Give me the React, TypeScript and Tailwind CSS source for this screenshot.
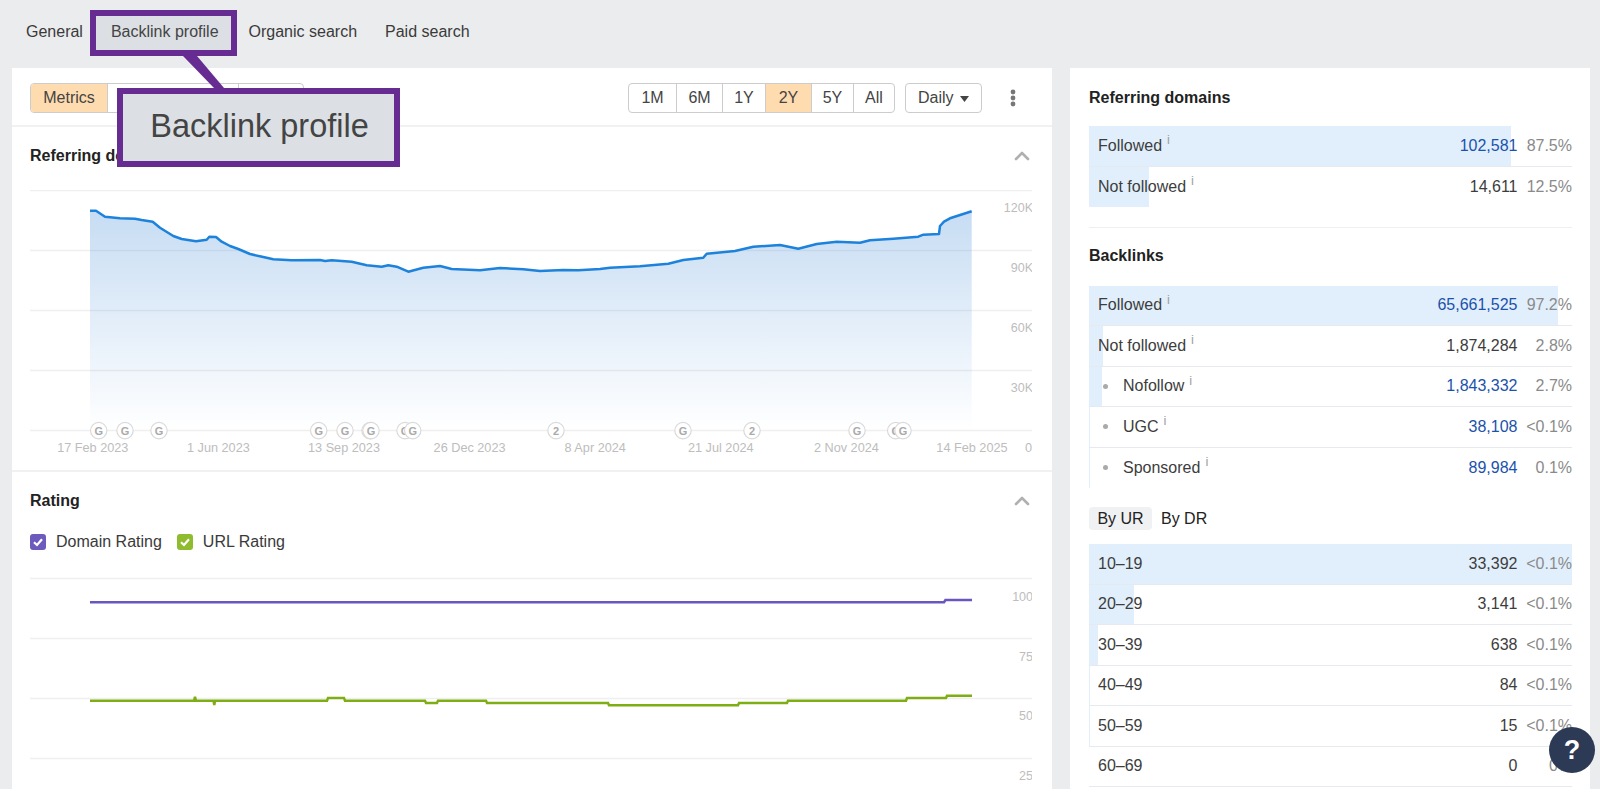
import { ChevronUp } from "lucide-react";

// points read off the reference, page coordinates
const blueLine: [number, number][] = [
  [90, 210.7], [96, 210.7], [105, 216.7], [120, 218.3], [135, 218.7], [141.7, 220], [152.7, 221.7],
  [160, 227.7], [173.3, 236], [181.7, 239], [196, 241.3], [206.7, 239.7], [209.3, 236.7], [216, 237],
  [221.7, 241.7], [230, 246], [238.3, 249], [250, 254], [273.3, 259.3], [291.7, 260.3], [320, 260],
  [325, 261], [331.7, 260.3], [351.7, 261.7], [366.7, 265.3], [381.7, 266.7], [388.3, 265.3], [396.7, 266.7],
  [408.3, 271.7], [423.3, 267.7], [440, 266], [451.7, 269], [480, 270.3], [500, 268], [523.3, 269.3],
  [540, 271], [563.3, 270], [578.3, 270.3], [600, 269], [610, 267.7], [640, 266.3], [668.3, 263.7],
  [683.3, 260], [703.3, 257.7], [706.7, 253.7], [735, 251], [753.3, 246.7], [780, 245], [798.3, 248.7],
  [816.7, 244], [836.7, 241.7], [860, 242.7], [870, 240.3], [893.3, 238.7], [918.3, 236.7], [923.3, 234.7],
  [939, 234], [940, 226], [944, 221.7], [950, 218.3], [971.7, 211.3],
];

const greenLine: [number, number][] = [
  [90, 700.7], [194, 700.7], [195, 696.7], [196, 700.7], [213.5, 700.7], [214.3, 705], [215, 700.7],
  [327, 700.7], [328, 698], [344, 698], [345, 700.7], [425, 700.7], [426, 703], [437, 703], [438, 700.7],
  [486, 700.7], [487, 703], [608, 703], [609, 705.3], [738, 705.3], [739, 703], [787, 703], [788, 700.7],
  [906, 700.7], [907, 698], [946, 698], [947, 695.7], [972, 695.7],
];

const badges: [number, string][] = [
  [98.7, "G"], [125, "G"], [159, "G"], [318.7, "G"], [345, "G"], [370, "G"], [371, "G"], [405, "G"], [412.7, "G"],
  [556, "2"], [683, "G"], [752, "2"], [857, "G"], [895.7, "G"], [903, "G"],
];

const dates = ["17 Feb 2023", "1 Jun 2023", "13 Sep 2023", "26 Dec 2023", "8 Apr 2024", "21 Jul 2024", "2 Nov 2024", "14 Feb 2025"];

const toPoints = (pts: [number, number][]) => pts.map((p) => p.join(",")).join(" ");

interface RowData {
  label: string;
  value: string;
  pct: string;
  bar: number;
  link?: boolean;
  bullet?: boolean;
  info?: boolean;
}

const referring: RowData[] = [
  { label: "Followed", value: "102,581", pct: "87.5%", bar: 87.4, link: true, info: true },
  { label: "Not followed", value: "14,611", pct: "12.5%", bar: 12.4, info: true },
];

const backlinks: RowData[] = [
  { label: "Followed", value: "65,661,525", pct: "97.2%", bar: 97.1, link: true, info: true },
  { label: "Not followed", value: "1,874,284", pct: "2.8%", bar: 2.8, info: true },
  { label: "Nofollow", value: "1,843,332", pct: "2.7%", bar: 2.7, link: true, bullet: true, info: true },
  { label: "UGC", value: "38,108", pct: "<0.1%", bar: 0.2, link: true, bullet: true, info: true },
  { label: "Sponsored", value: "89,984", pct: "0.1%", bar: 0.2, link: true, bullet: true, info: true },
];

const byRating: RowData[] = [
  { label: "10–19", value: "33,392", pct: "<0.1%", bar: 100 },
  { label: "20–29", value: "3,141", pct: "<0.1%", bar: 9.4 },
  { label: "30–39", value: "638", pct: "<0.1%", bar: 1.9 },
  { label: "40–49", value: "84", pct: "<0.1%", bar: 0.25 },
  { label: "50–59", value: "15", pct: "<0.1%", bar: 0.25 },
  { label: "60–69", value: "0", pct: "0%", bar: 0 },
];

const ranges = [
  { label: "1M", width: "w-[47px]" },
  { label: "6M", width: "w-[46px]" },
  { label: "1Y", width: "w-[43px]" },
  { label: "2Y", width: "w-[46px]", active: true },
  { label: "5Y", width: "w-[42px]" },
  { label: "All", width: "w-[41px]" },
];

const Row = ({ row, noBorder }: { row: RowData; noBorder?: boolean }) => (
  <div className={`relative flex h-[40.5px] items-center pl-[9px] text-[16px] ${noBorder ? "" : "border-b border-[#e6e9ee]"}`}>
    <div className="absolute inset-y-0 left-0 bg-[#e1effc]" style={{ width: `${row.bar}%` }} />
    <div className="relative flex flex-1 items-center text-[#3d3d3d]">
      {row.bullet && <span className="ml-[5px] mr-[15px] h-[5px] w-[5px] rounded-full bg-[#aaaaaa]" />}
      <span>{row.label}</span>
      {row.info && <span className="relative -top-[6px] ml-[5px] text-[13px] text-[#a0a0a0]">i</span>}
    </div>
    <span className={`relative ${row.link ? "text-[#1b52ab]" : "text-[#3d3d3d]"}`}>{row.value}</span>
    <span className="relative w-[54.5px] text-right text-[#8a8a8a]">{row.pct}</span>
  </div>
);

const Check = ({ color }: { color: string }) => (
  <svg width="16" height="16" viewBox="0 0 16 16">
    <rect width="16" height="16" rx="3" fill={color} />
    <path d="M4 8.2 L7 11 L12 5.2" fill="none" stroke="#ffffff" strokeWidth="2.2" />
  </svg>
);

const gridColor = "#efefef";
const axisColor = "#bdbdbd";

export default function App() {
  return (
    <div className="relative h-[789px] w-full overflow-hidden bg-[#ebecee] font-['Liberation_Sans',Arial,sans-serif]">
      {/* Tabs */}
      <nav className="flex h-[68px] items-center pb-[4px] pl-3 text-[16px] text-[#3a3a3a]">
        <div className="px-[14px]">General</div>
        <div className="-ml-[7px] -mr-[2px] mt-[2px] box-border flex h-[46px] items-center border-[6px] border-[#672c91] bg-[#dce0e5] pb-[2px] pl-[15px] pr-[12px] text-[#444444]">
          Backlink profile
        </div>
        <div className="px-[14px]">Organic search</div>
        <div className="px-[14px]">Paid search</div>
      </nav>

      <div className="flex gap-[18px] pl-3">
        {/* Left card */}
        <main className="w-[1040px] bg-white">
          <div className="box-border flex h-[59px] items-center border-b-2 border-[#f1f1f1] pl-[18px] pr-[36px] pt-[3px] text-[16px] text-[#444444]">
            <div className="flex h-[30px] overflow-hidden rounded-[4px] border border-[#cccccc]">
              <div className="flex w-[76px] items-center justify-center bg-[#ffdcb0]">Metrics</div>
              <div className="w-[131px] border-l border-[#cccccc]" />
              <div className="w-[65px] border-l border-[#cccccc]" />
            </div>
            <div className="ml-auto flex h-[30px] overflow-hidden rounded-[4px] border border-[#cccccc]">
              {ranges.map((r, i) => (
                <div
                  key={r.label}
                  className={`flex items-center justify-center ${r.width} ${r.active ? "bg-[#ffdcb0]" : ""} ${i > 0 ? "border-l border-[#cccccc]" : ""}`}
                >
                  {r.label}
                </div>
              ))}
            </div>
            <div className="ml-[10px] flex h-[30px] w-[77px] items-center rounded-[4px] border border-[#cccccc] pl-[12px]">
              Daily
              <svg className="ml-[6px] mt-[2px]" width="9" height="6" viewBox="0 0 9 6">
                <polygon points="0,0 9,0 4.5,6" fill="#444444" />
              </svg>
            </div>
            <svg className="ml-[28px]" width="6" height="18" viewBox="0 0 6 18">
              <circle cx="3" cy="3" r="2.4" fill="#777777" />
              <circle cx="3" cy="9" r="2.4" fill="#777777" />
              <circle cx="3" cy="15" r="2.4" fill="#777777" />
            </svg>
          </div>

          {/* Referring domains chart */}
          <section className="box-border h-[345px] border-b-2 border-[#f1f1f1] pl-[18px] pr-5">
            <div className="flex h-[63px] items-center justify-between pb-[5px]">
              <h2 className="text-[16px] font-bold text-[#222222]">Referring domains</h2>
              <ChevronUp className="-mr-[2px] text-[#b0b0b0]" size={24} strokeWidth={2.6} />
            </div>
            <svg className="block" width="1002" height="250" viewBox="30 190 1002 250">
              <defs>
                <linearGradient id="areaFill" gradientUnits="userSpaceOnUse" x1="0" y1="205" x2="0" y2="430">
                  <stop offset="0" stopColor="#4a90d9" stopOpacity="0.32" />
                  <stop offset="1" stopColor="#4a90d9" stopOpacity="0" />
                </linearGradient>
              </defs>
              {[190.5, 250.5, 310.5, 370.5, 430.5].map((y) => (
                <line key={y} x1="30" x2="1032" y1={y} y2={y} stroke={gridColor} strokeWidth="1.5" />
              ))}
              <polygon points={`90,430 ${toPoints(blueLine)} 971.7,430`} fill="url(#areaFill)" />
              <polyline points={toPoints(blueLine)} fill="none" stroke="#1c82dc" strokeWidth="2.5" strokeLinejoin="round" />
              {[["120K", 212], ["90K", 272], ["60K", 332], ["30K", 392]].map(([label, y]) => (
                <text key={label} x="1033" y={y} textAnchor="end" fontSize="12.5" fill={axisColor}>
                  {label}
                </text>
              ))}
              {badges.map(([x, label], i) => (
                <g key={i}>
                  <circle cx={x} cy="430.6" r="8.2" fill="#ffffff" stroke="#dadada" strokeWidth="1.2" />
                  <text x={x} y="434.6" textAnchor="middle" fontSize="11" fontWeight="bold" fill="#aaaaaa">
                    {label}
                  </text>
                </g>
              ))}
            </svg>
            <div className="relative grid grid-cols-[repeat(8,125.6px)] text-center text-[12.7px] leading-[16px] text-[#bdbdbd]">
              {dates.map((d) => (
                <span key={d} className="whitespace-nowrap">
                  {d}
                </span>
              ))}
              <span className="absolute right-0 top-0">0</span>
            </div>
          </section>

          {/* Rating chart */}
          <section className="pl-[18px] pr-5">
            <div className="flex h-[57px] items-center justify-between">
              <h2 className="text-[16px] font-bold text-[#222222]">Rating</h2>
              <ChevronUp className="-mr-[2px] text-[#b0b0b0]" size={24} strokeWidth={2.6} />
            </div>
            <div className="flex h-[26px] items-center text-[16px] text-[#3a3a3a]">
              <Check color="#6c5bbd" />
              <span className="ml-[10px]">Domain Rating</span>
              <span className="ml-[15px]">
                <Check color="#8fbb2e" />
              </span>
              <span className="ml-[10px]">URL Rating</span>
            </div>
            <svg className="mt-[15px] block" width="1002" height="219" viewBox="30 570 1002 219">
              {[578.5, 638.5, 698.5, 758.5].map((y) => (
                <line key={y} x1="30" x2="1032" y1={y} y2={y} stroke={gridColor} strokeWidth="1.5" />
              ))}
              <polyline points="90,602.3 944,602.3 945.5,600 972,600" fill="none" stroke="#6a56c0" strokeWidth="2.5" />
              <polyline points={toPoints(greenLine)} fill="none" stroke="#7fae14" strokeWidth="2.5" />
              {[["100", 601], ["75", 661], ["50", 720], ["25", 780]].map(([label, y]) => (
                <text key={label} x="1033" y={y} textAnchor="end" fontSize="12.5" fill={axisColor}>
                  {label}
                </text>
              ))}
            </svg>
          </section>
        </main>

        {/* Right card */}
        <aside className="h-[721px] w-[520px] bg-white pl-[19px] pr-[18px]">
          <h2 className="flex h-[58px] items-center pt-[2px] text-[16px] font-bold text-[#222222]">Referring domains</h2>
          {referring.map((row, i) => (
            <Row key={row.label} row={row} noBorder={i === referring.length - 1} />
          ))}
          <div className="mt-[20px] border-t border-[#efefef]" />
          <h2 className="flex h-[57.5px] items-center pb-[2px] text-[16px] font-bold text-[#222222]">Backlinks</h2>
          {backlinks.map((row, i) => (
            <Row key={row.label} row={row} noBorder={i === backlinks.length - 1} />
          ))}
          <div className="mb-[14px] mt-[19px] flex h-[23px] items-center text-[16px] text-[#222222]">
            <span className="flex h-full w-[63px] items-center justify-center rounded-[4px] bg-[#f0f1f3]">By UR</span>
            <span className="ml-[9px]">By DR</span>
          </div>
          {byRating.map((row) => (
            <Row key={row.label} row={row} />
          ))}
        </aside>
      </div>

      {/* Callout over the chart */}
      <svg className="absolute left-[170px] top-[50px]" width="70" height="45" viewBox="170 50 70 45">
        <polygon points="183,56 197,56 224,88 214,88" fill="#672c91" />
      </svg>
      <div className="absolute left-[117px] top-[88px] box-border flex h-[79px] w-[283px] items-center justify-center border-[6px] border-[#672c91] bg-[#dce0e5] pb-[3px] pl-[2px] text-[32.5px] text-[#444444]">
        Backlink profile
      </div>

      {/* Help button */}
      <div className="absolute left-[1549px] top-[727px] flex h-[46px] w-[46px] items-center justify-center rounded-full bg-[#2c3a55] text-[27px] font-bold text-white">
        ?
      </div>
    </div>
  );
}
